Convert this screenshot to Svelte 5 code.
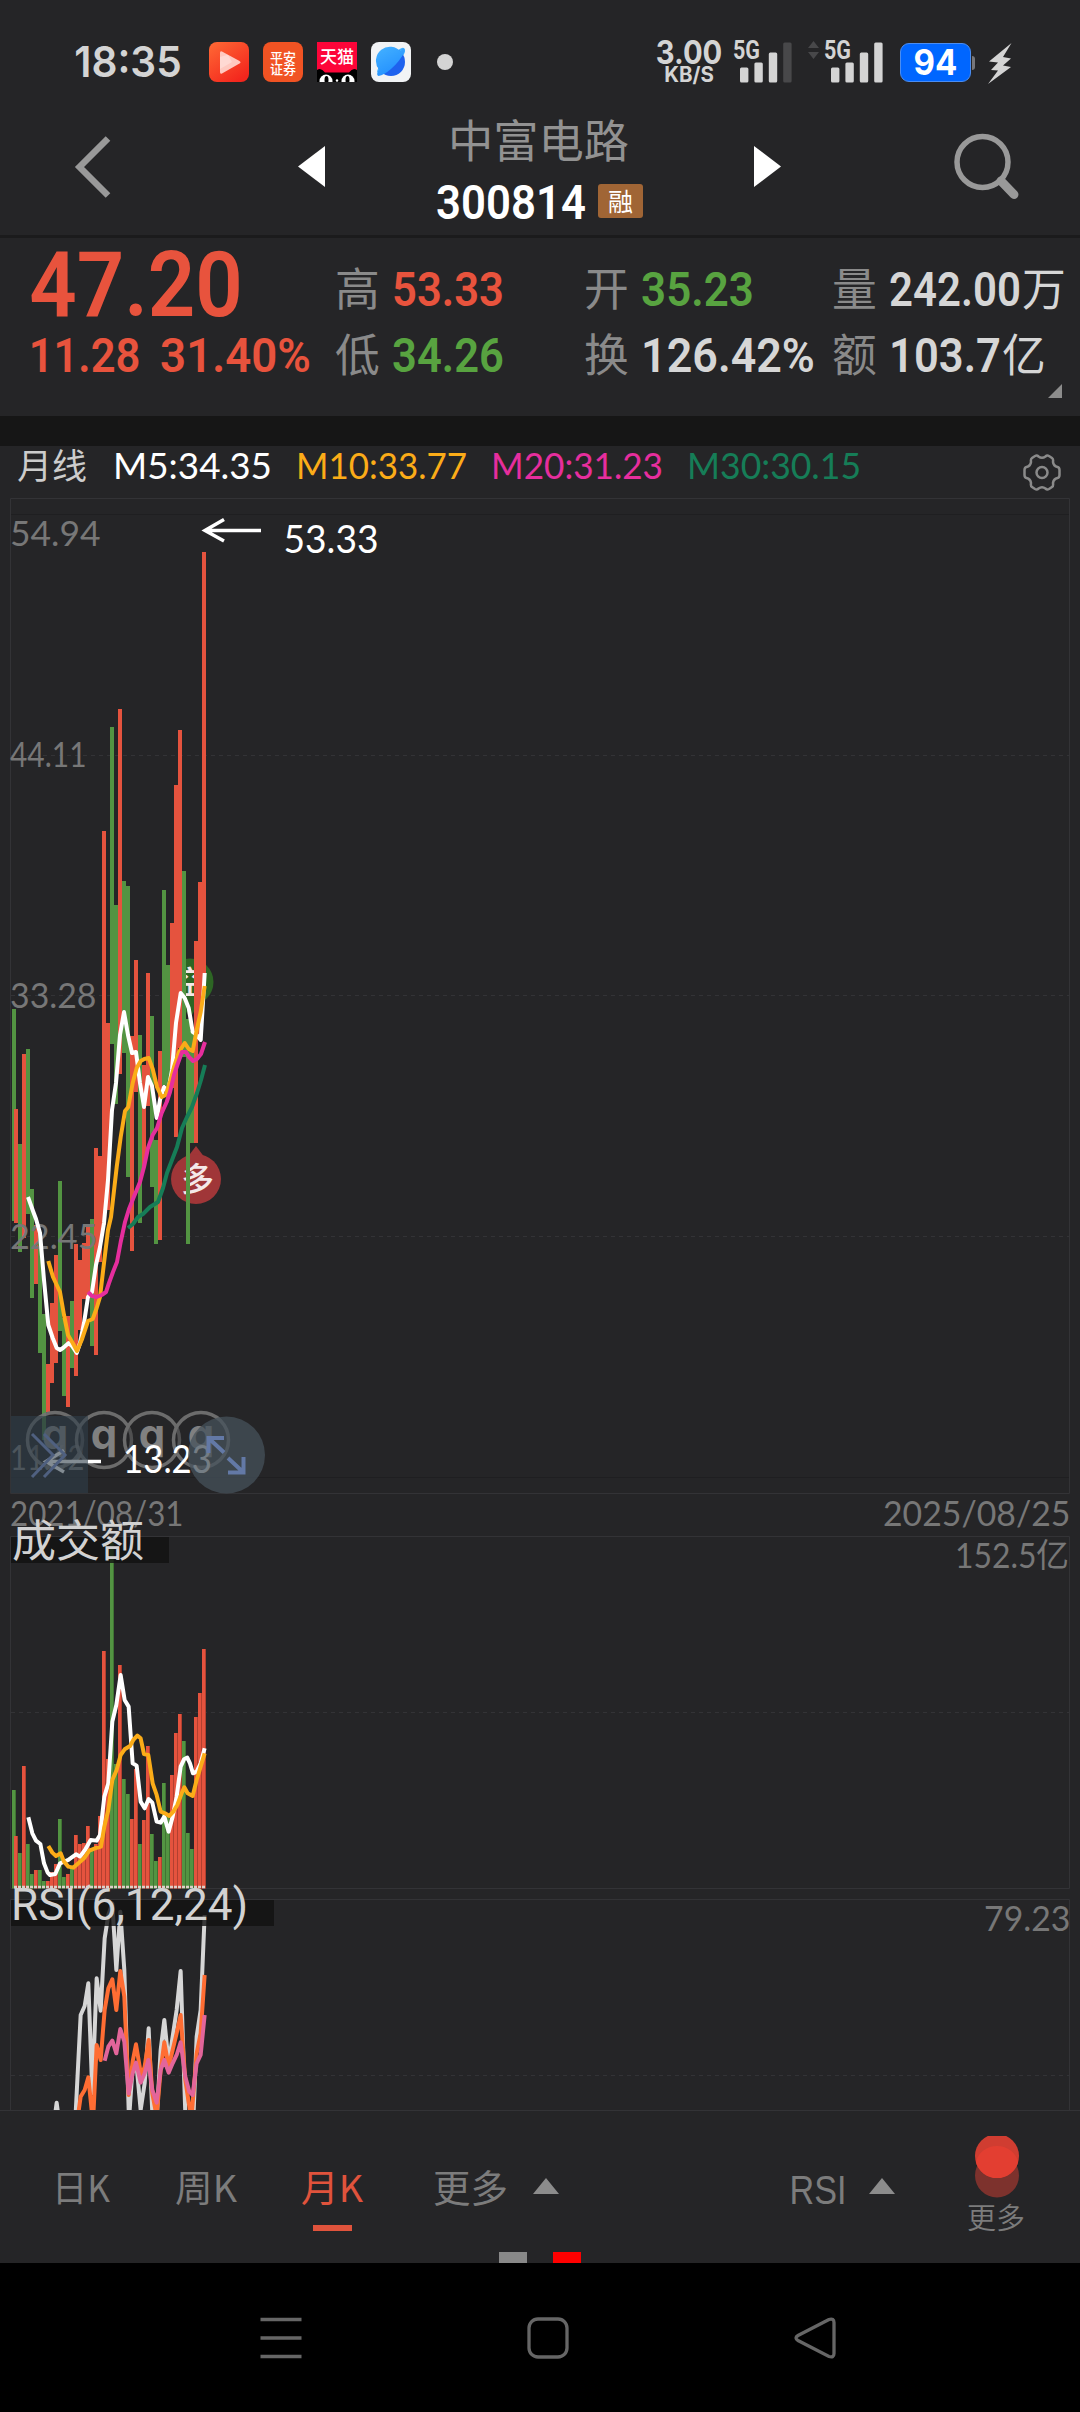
<script lang="ts">
	type Candle = [up: number, high: number, low: number, volume: number];

	// up flag, high, low, top of the volume bar
	const candles: Candle[] = [
		[0, 1009, 1221, 1790], [1, 1109, 1223, 1836], [0, 1144, 1252, 1853], [1, 1054, 1238, 1766],
		[0, 1049, 1214, 1844], [0, 1189, 1298, 1874], [1, 1225, 1284, 1870], [0, 1232, 1353, 1870],
		[0, 1314, 1440, 1881], [1, 1364, 1412, 1881], [1, 1303, 1383, 1872], [1, 1255, 1363, 1864],
		[0, 1181, 1331, 1819], [0, 1318, 1396, 1877], [1, 1316, 1407, 1874], [0, 1301, 1368, 1867],
		[1, 1244, 1376, 1835], [1, 1260, 1330, 1844], [1, 1243, 1299, 1843], [1, 1225, 1297, 1826],
		[0, 1219, 1346, 1848], [1, 1148, 1355, 1844], [1, 1156, 1262, 1816], [1, 831, 1225, 1651],
		[1, 1023, 1210, 1759], [0, 727, 1044, 1540], [0, 905, 1104, 1764], [1, 709, 1074, 1665],
		[0, 881, 1053, 1779], [0, 886, 1177, 1794], [1, 1036, 1251, 1819], [1, 960, 1092, 1769],
		[0, 1035, 1223, 1844], [1, 1065, 1167, 1820], [1, 973, 1106, 1746], [0, 1016, 1187, 1834],
		[0, 1140, 1244, 1861], [1, 1051, 1240, 1857], [0, 890, 1085, 1783], [0, 965, 1092, 1817],
		[1, 923, 1088, 1775], [1, 785, 1137, 1733], [1, 730, 1048, 1714], [0, 871, 1057, 1741],
		[0, 1019, 1244, 1833], [0, 1031, 1143, 1849], [1, 941, 1143, 1717], [1, 882, 1040, 1693],
		[1, 552, 985, 1649]
	];

	const barX = (i: number) => (i === 0 ? 12 : 10 + 4 * i);

	const priceLines = [
		{ color: '#ffffff', points: '28,1197 33,1211 36,1219 40,1233 44,1280 48.3,1325 52.7,1338 56.7,1348 60,1350 63,1348 68.7,1343 72,1346 76.7,1353 80,1343 84,1323 88,1297 92,1292 96,1265 100,1247 104,1223 108,1180 112,1110 116,1083 120,1035 124,1012 128,1035 132,1053 136,1052 140,1083 144,1107 148,1077 152,1086 156.7,1118 160,1100 164,1087 168,1092 172,1070 176,1023 180.7,993 184.7,998 188.7,1008 192.7,1032 196.7,1035 200.7,1040 204.7,973' },
		{ color: '#fbac18', points: '48.3,1261 53,1277 60,1292 64,1315 68,1335 72.7,1343 77,1351 81.7,1340 88,1321 92.7,1319 96.7,1308 100,1297 104,1263 108,1230 111,1217 116.7,1167 120.7,1137 125,1111 128.3,1107 132.7,1083 136.7,1068 140.7,1061 144.3,1059 148.7,1058 152.7,1069 157,1087 161.7,1097 165.7,1095 170,1082 174,1067 179,1052 184.7,1043 188.7,1049 192.7,1051 196.7,1030 200.7,1012 204.7,986' },
		{ color: '#e62e9d', points: '88,1292 92,1296 96.7,1297 101.7,1295 106,1292 109,1283 113,1272 117,1262 120.7,1242 125,1222 129,1209 133,1199 140,1182 144,1167 148,1148 152.7,1135 157,1128 161.7,1113 166.7,1102 170,1092 174,1075 178,1063 182,1052 186,1052 189,1057 193,1061 197,1059 201,1054 205,1042' },
		{ color: '#167d57', points: '128,1228 133,1224 138,1217 143,1214 150,1207 158,1202 163,1188 167,1173 172,1160 177,1147 182,1128 187,1117 192,1107 197,1093 201,1080 205,1065' }
	];

	// lower panels are kept on a grid of thirds, see the scaled groups below
	const volumeLines = [
		{ color: '#ffffff', points: '85,952 97,1000 108,1022 121,1032 132,1090 143,1118 150,1125 166,1122 180,1090 205,1080 228,1063 240,1070 255,1050 272,1020 290,1022 300,1005 313,890 325,850 337,665 349,615 362,525 374,600 386,620 398,790 410,797 422,905 434,925 446,897 457,908 470,965 482,968 493,950 506,995 518,950 530,890 542,800 552,778 562,773 570,790 579,820 590,815 602,790 614,745' },
		{ color: '#fbac18', points: '145,1038 157,1058 168,1068 182,1060 192,1085 205,1100 220,1103 235,1090 252,1075 268,1052 285,1045 303,1040 313,980 325,930 337,840 350,810 362,765 374,748 390,738 400,720 412,707 422,715 432,762 445,765 458,850 470,885 482,935 495,940 508,948 520,935 532,915 545,880 553,862 563,880 578,888 590,840 602,800 614,760' }
	];

	const rsiLines = [
		{ color: '#d6d6d6', points: '158,760 170,668 182,760 224,760 242,405 254,378 265,310 277,640 290,295 302,392 314,175 325,105 337,70 349,270 361,95 373,270 387,720 398,560 410,560 422,690 434,610 446,445 457,700 470,720 482,510 493,420 506,550 518,470 530,390 542,273 556,700 568,720 580,720 590,470 602,390 614,105' },
		{ color: '#ff6d33', points: '235,700 242,650 254,630 265,592 279,730 290,495 302,540 314,390 325,325 337,298 349,390 361,273 373,350 386,645 398,545 408,493 424,590 434,560 446,480 457,640 470,710 482,570 493,487 506,560 518,510 530,460 542,405 556,600 574,720 590,520 602,460 614,285' },
		{ color: '#e3659a', points: '314,542 325,500 337,482 349,520 361,447 373,485 386,640 398,580 408,548 422,608 434,580 445,540 457,630 470,668 482,570 493,540 506,578 518,550 530,525 542,487 556,590 568,635 578,645 590,550 602,525 614,405' }
	];

	const axis = [
		{ text: '54.94', x: 12, y: 545.5, w: 87 },
		{ text: '44.11', x: 12, y: 766.5, w: 73 },
		{ text: '33.28', x: 12, y: 1007.5, w: 83 },
		{ text: '22.45', x: 12, y: 1248.5, w: 84 },
		{ text: '11.62', x: 12, y: 1469.5, w: 71 },
		{ text: '2021/08/31', x: 12, y: 1525.5, w: 170 },
		{ text: '2025/08/25', x: 885, y: 1525.5, w: 184 },
		{ text: '152.5', x: 957, y: 1567.5, w: 78 },
		{ text: '79.23', x: 986, y: 1930.5, w: 83 }
	];

	const quotes = [
		[
			{ name: '高', value: '53.33', w: 108, tone: 'up' },
			{ name: '低', value: '34.26', w: 108, tone: 'down' }
		],
		[
			{ name: '开', value: '35.23', w: 109, tone: 'down' },
			{ name: '换', value: '126.42%', w: 170, tone: 'plain' }
		],
		[
			{ name: '量', value: '242.00', w: 128, unit: '万', tone: 'plain' },
			{ name: '额', value: '103.7', w: 108, unit: '亿', tone: 'plain' }
		]
	];

	const legend = [
		{ text: 'M5:34.35', w: 154, color: '#ffffff' },
		{ text: 'M10:33.77', w: 166, color: '#fbac18' },
		{ text: 'M20:31.23', w: 167, color: '#e62e9d' },
		{ text: 'M30:30.15', w: 169, color: '#167d57' }
	];

	const tabs = [
		{ name: '日K', w: 58 },
		{ name: '周K', w: 62 },
		{ name: '月K', w: 62 }
	];
	let active = $state('月K');
</script>

<!-- text squeezed to a given width, box height is the cap height -->
{#snippet fit(text: string, w: number, size: number, cls: string, pad = 0.05)}
	<svg class="fit {cls}" width={w} height={size * 0.715}>
		<text x={-pad * size} y={size * 0.715} font-size={size} textLength={w + 2 * pad * size} lengthAdjust="spacingAndGlyphs">{text}</text>
	</svg>
{/snippet}

{#snippet signal(bars: number[], weak: number)}
	<svg class="signal" width="57" height="42" viewBox="0 0 57 42">
		<text x="-1" y="18" font-size="25" textLength="27" lengthAdjust="spacingAndGlyphs">5G</text>
		{#each bars as h, i}
			<rect x={6 + i * 14.4} y={41.5 - h} width="8.4" height={h} rx="1.5" class:weak={i >= weak} />
		{/each}
	</svg>
{/snippet}

<div class="screen">
	<div class="status">
		<div class="status-left">
			{@render fit('18:35', 104, 43, 'clock', 0.04)}
			<div class="apps">
				<svg width="40" height="40" viewBox="0 0 40 40">
					<defs>
						<linearGradient id="video" x1="0" y1="0" x2="0.7" y2="1">
							<stop offset="0" stop-color="#ff6a35" />
							<stop offset="1" stop-color="#f3261d" />
						</linearGradient>
						<linearGradient id="planet" x1="0" y1="0" x2="0.5" y2="1">
							<stop offset="0" stop-color="#45b2ff" />
							<stop offset="1" stop-color="#2390ff" />
						</linearGradient>
					</defs>
					<rect width="40" height="40" rx="8" fill="url(#video)" />
					<path d="M13 9.500 30.500 19q2 1.300 0 2.600L13 31.500q-2 1-2-1.500V11q0-2.500 2-1.500z" fill="#ffc9c0" />
					<path d="M11 15 19 12.800 23 20 11 27z" fill="#fff" opacity=".3" />
				</svg>
				<svg width="40" height="40" viewBox="0 0 40 40">
					<rect width="40" height="40" rx="8" fill="#f15323" />
					<g class="app-text thin-app" font-size="13">
						<text x="7" y="19.500">平安</text>
						<text x="7" y="31.500">证券</text>
					</g>
				</svg>
				<svg width="40" height="40" viewBox="0 0 40 40">
					<clipPath id="app"><rect width="40" height="40" rx="8" /></clipPath>
					<g clip-path="url(#app)">
						<rect width="40" height="40" fill="#fd0539" />
						<path d="M0 40V28q4-3 8 2.500h24Q36 25 40 28v12z" fill="#000" />
						<circle cx="9" cy="39" r="6.500" fill="#fff" />
						<circle cx="31" cy="39" r="6.500" fill="#fff" />
						<ellipse cx="9.500" cy="38" rx="2" ry="4" fill="#000" />
						<ellipse cx="30.500" cy="38" rx="2" ry="4" fill="#000" />
						<circle cx="20" cy="38.500" r="1.200" fill="#fff" />
						<text class="app-text thin-app" x="3" y="21" font-size="17">天猫</text>
					</g>
				</svg>
				<svg width="40" height="40" viewBox="0 0 40 40">
					<rect width="40" height="40" rx="8" fill="#f1f3f5" />
					<path d="M28 7.500Q32 4.500 33.500 6.500 35 9 32 14 31 20 6 30.500 6 28 8 25z" fill="#45b2ff" />
					<circle cx="20" cy="20" r="14" fill="#1e62ee" />
					<path d="M30 10A14 14 0 0 0 8 27.500Q4.500 33 7.500 34 13 33 20 27 29 19 33.500 10q1-5-3-3z" fill="url(#planet)" />
				</svg>
			</div>
			<span class="dot"></span>
		</div>
		<div class="status-right">
			<div class="speed">
				{@render fit('3.00', 64, 32, 'bold', 0.04)}
				{@render fit('KB/S', 48, 21, 'bold', 0.04)}
			</div>
			{@render signal([15, 20, 30, 40], 3)}
			<svg class="traffic" width="11" height="18" viewBox="0 0 11 18">
				<path d="M0 7 5.500 0 11 7zM0 11h11l-5.500 7z" />
			</svg>
			{@render signal([15, 20, 30, 40], 4)}
			<div class="battery">
				{@render fit('94', 41, 35, 'bold', 0.04)}
			</div>
			<svg class="bolt" width="25" height="41" viewBox="0 0 25 41">
				<path d="M23.500 0 1 18.500l9 1L3 27l7 .5L0 41l23-17-8-1.500 8-7-8-1.500z" />
			</svg>
		</div>
	</div>

	<header>
		<button class="back" aria-label="back">
			<svg width="40" height="66" viewBox="0 0 40 66">
				<path d="M35 4.500 6.500 33 35 61.500" />
			</svg>
		</button>
		<button aria-label="previous">
			<svg width="27" height="41" viewBox="0 0 27 41"><path d="M27 0v41L0 20.500z" fill="#fff" /></svg>
		</button>
		<div class="stock">
			{@render fit('中富电路', 181, 45, 'cjk name', 0)}
			<div class="code">
				{@render fit('300814', 146, 47.500, 'din', 0.04)}
				<span class="badge">融</span>
			</div>
		</div>
		<button aria-label="next">
			<svg width="27" height="41" viewBox="0 0 27 41"><path d="M0 0v41l27-20.500z" fill="#fff" /></svg>
		</button>
		<button class="search" aria-label="search">
			<svg width="66" height="68" viewBox="0 0 66 68">
				<circle cx="28.500" cy="29" r="25.500" stroke-width="5.500" />
				<path d="M47 48 60 61.500" stroke-width="9" stroke-linecap="round" />
			</svg>
		</button>
	</header>

	<section class="quote">
		<div class="price">
			<div class="row big">{@render fit('47.20', 210, 91, 'din up', 0.02)}</div>
			<div class="row small">
				{@render fit('11.28', 107, 47.500, 'din up')}
				{@render fit('31.40%', 147, 47.500, 'din up', 0.04)}
			</div>
		</div>
		<div class="figures">
			{#each quotes as column}
				<div class="column">
					{#each column as q}
						<div class="row">
							{@render fit(q.name, 43, 45, 'cjk label', 0.02)}
							{@render fit(q.value, q.w, 47.500, 'din value ' + q.tone, 0.04)}
							{#if q.unit}
								{@render fit(q.unit, 42, 45, 'cjk unit', 0.02)}
							{/if}
						</div>
					{/each}
				</div>
			{/each}
			<span class="corner"></span>
		</div>
	</section>

	<div class="legend">
		{@render fit('月线', 70, 35, 'cjk', 0)}
		{#each legend as item}
			<svg class="fit lato" width={item.w} height="27">
				<text x="-3" y="27" font-size="37.500" fill={item.color} textLength={item.w + 5} lengthAdjust="spacingAndGlyphs">{item.text}</text>
			</svg>
		{/each}
		<svg class="gear" width="38" height="38" viewBox="0 0 38 38">
			<path d="M12 2q2-1 3.500.5 3.500 2.500 7 0Q24 1 26 2l3 2q1.500 1 1 4 .5 4 4.500 5 2 .5 2 3v5q0 2.500-2 3-4 1-4.500 5 .5 3-1 4l-3 2q-2 1-3.500-.5-3.500-2.500-7 0Q14 36 12 35l-3-2q-1.500-1-1-4-.5-4-4.500-5-2-.5-2-3v-5q0-2.500 2-3 4-1 4.500-5-.5-3 1-4z" />
			<circle cx="19" cy="18.500" r="5.500" />
		</svg>
	</div>

	<svg class="chart" width="1080" height="1613" viewBox="0 498 1080 1613">
		<g class="frame">
			<path d="M10.500 498.500H1069.500V1493.500H10.500z" />
			<path d="M10.500 1536.500H1069.500V1888.500H10.500z" />
			<path d="M10.500 2111V1899.500H1069.500V2111" />
			<path d="M0 2110.500H1080" />
			<path class="inner" d="M11 514.500H1069M11 1477.500H1069" />
			<path class="dash" d="M11 755.500H1069M11 995.500H1069M11 1236.500H1069M11 1712.500H1069M11 2075.500H1069" />
		</g>

		<g class="marker">
			<path d="M180 1002 190 1018 200 1002z" fill="#2d6624" />
			<circle cx="190" cy="982" r="23.500" fill="#2d6624" />
			<text x="174" y="994" font-size="32">空</text>
			<path d="M187 1158 196 1146 205 1158z" fill="#a03638" />
			<circle cx="196" cy="1179" r="25" fill="#a03638" />
			<text x="181" y="1191" font-size="33">多</text>
		</g>

		{#each candles as [up, high, low, volume], i}
			<rect class={up ? 'rise' : 'fall'} x={barX(i)} y={high} width="4" height={low - high} />
			<rect class={up ? 'rise' : 'fall'} x={barX(i)} y={volume} width="4" height={1888.5 - volume} />
			<rect class="shade" x={barX(i) + 3} y={volume} width="1" height={1888.5 - volume} />
		{/each}
		<path class="zero" d="M14 1887H205" />

		<g class="axis">
			{#each axis as a}
				<text x={a.x - 2} y={a.y} textLength={a.w + 3.5} lengthAdjust="spacingAndGlyphs">{a.text}</text>
			{/each}
			<text class="cjk-text" x="1036" y="1567" font-size="33">亿</text>
		</g>

		<g class="lines">
			{#each priceLines as line}
				<polyline points={line.points} stroke={line.color} stroke-width="4" />
			{/each}
		</g>
		<g class="lines" transform="translate(0 1500) scale(0.3333)">
			{#each volumeLines as line}
				<polyline points={line.points} stroke={line.color} stroke-width="12" />
			{/each}
		</g>
		<clipPath id="rsi"><rect x="11" y="1900" width="1058" height="210" /></clipPath>
		<g clip-path="url(#rsi)">
			<g class="lines" transform="translate(0 1880) scale(0.3333)">
				{#each rsiLines as line}
					<polyline points={line.points} stroke={line.color} stroke-width="12" />
				{/each}
			</g>
		</g>

		<g class="callout">
			<path d="M261 530.500H205M224 519.500 205 530.500 224 541" />
			<text x="283.500" y="552.500" font-size="38.500" textLength="95" lengthAdjust="spacingAndGlyphs">53.33</text>
		</g>

		<g class="events">
			{#each [55, 104, 152, 201] as cx}
				<circle {cx} cy="1440" r="27.500" />
				<text x={cx} y="1449" text-anchor="middle">q</text>
			{/each}
		</g>
		<g class="callout">
			<path d="M101 1461.500H46M64 1450.500 46 1461.500 64 1472" />
			<text x="123" y="1473" font-size="38" textLength="89" lengthAdjust="spacingAndGlyphs">13.23</text>
		</g>
		<rect class="handle" x="11" y="1416" width="77" height="77" />
		<circle class="expand" cx="226.500" cy="1455" r="38.500" />
		<g class="tool-icon">
			<path class="chevrons" d="M32 1434 53 1455 32 1477M44 1434 65 1455 44 1477" />
			<path d="M224 1438H208.500V1453M209 1438.500 224 1452.500M228 1472.500H243.500V1457M243 1472 228 1458" />
		</g>

		<g class="panel-title">
			<rect x="11" y="1537" width="158" height="26" />
			<text class="cjk-text" x="12" y="1557" font-size="44" textLength="132" lengthAdjust="spacingAndGlyphs">成交额</text>
			<rect x="11" y="1900" width="263" height="26" />
			<text x="11" y="1919.500" font-size="44" textLength="237" lengthAdjust="spacingAndGlyphs">RSI(6,12,24)</text>
		</g>
	</svg>

	<div class="toolbar">
		{#each tabs as tab}
			<button class="tab" class:active={active === tab.name} onclick={() => (active = tab.name)}>
				{@render fit(tab.name, tab.w, 37, 'cjk', 0)}
			</button>
		{/each}
		<button class="menu">
			{@render fit('更多', 75, 38, 'cjk', 0)}
			<span class="caret"></span>
		</button>
		<button class="menu indicator">
			{@render fit('RSI', 52, 41, 'thin', 0.06)}
			<span class="caret"></span>
		</button>
		<button class="more">
			<svg width="46" height="62" viewBox="0 0 46 62">
				<circle cx="23" cy="39.500" r="22" fill="#7d322d" />
				<circle cx="23" cy="20" r="22" fill="#d03d31" />
				<path d="M1.800 26A22 22 0 0 1 44.200 26 22 22 0 0 1 1.800 26z" fill="#e33e31" />
			</svg>
			{@render fit('更多', 58, 29, 'cjk light', 0)}
		</button>
		<div class="pager"><span></span><span class="on"></span></div>
	</div>

	<nav>
		<svg width="42" height="42" viewBox="0 0 42 42"><path d="M0.500 2.500h41M0.500 21h41M0.500 39.500h41" /></svg>
		<svg width="42" height="42" viewBox="0 0 42 42"><rect x="2" y="2" width="38" height="38" rx="9" /></svg>
		<svg width="42" height="42" viewBox="0 0 42 42"><path d="M35 2.500 4 18.500q-4 2.500 0 5L35 39.500q5 1.500 5-3v-31q0-4.500-5-3z" /></svg>
	</nav>
</div>

<style>
	:global(body) {
		margin: 0;
		background: #000;
	}

	.screen {
		width: 1080px;
		height: 2412px;
		overflow: hidden;
		display: flex;
		flex-direction: column;
		background: #252527;
		font-family: Roboto, 'Noto Sans CJK SC', sans-serif;
	}

	button {
		border: none;
		background: transparent;
		padding: 0;
		display: flex;
		cursor: pointer;
	}

	svg {
		display: block;
		flex: none;
	}

	.fit {
		overflow: visible;
	}

	.din {
		font-weight: 600;
		fill: #fff;
	}

	.cjk {
		font-family: 'Noto Sans CJK SC', sans-serif;
		font-weight: 400;
	}

	.cjk.light {
		font-weight: 350;
	}

	.thin {
		font-weight: 300;
	}

	.bold {
		font-family: Inter, sans-serif;
		font-weight: 700;
		fill: #d4d4d4;
	}

	.lato {
		font-family: Lato, sans-serif;
	}

	.clock {
		font-family: Inter, sans-serif;
		font-weight: 600;
		fill: #d4d4d4;
	}

	/* status bar */
	.status {
		height: 82px;
		padding: 41px 67px 0 76px;
		box-sizing: border-box;
		display: flex;
		justify-content: space-between;
	}

	.status-left {
		display: flex;
		align-items: center;
	}

	.apps {
		display: flex;
		gap: 14px;
		margin-left: 29px;
		padding-top: 1px;
	}

	.app-text {
		font-family: 'Noto Sans CJK SC', sans-serif;
		font-weight: 700;
		fill: #fff;
	}

	.thin-app {
		font-weight: 500;
	}

	.dot {
		width: 16px;
		height: 16px;
		margin-left: 26px;
		border-radius: 50%;
		background: #d4d4d4;
	}

	.status-right {
		display: flex;
		align-items: flex-start;
	}

	.speed {
		width: 64px;
		margin-right: 13px;
		display: flex;
		flex-direction: column;
		align-items: center;
		gap: 3px;
	}

	.signal {
		font-family: Roboto, sans-serif;
		font-weight: 700;
		fill: #d4d4d4;
		overflow: visible;
	}

	.weak {
		fill: #48484a;
	}

	.traffic {
		margin: 0 6px 0 17px;
		fill: #48484a;
	}

	.battery {
		position: relative;
		width: 71px;
		height: 39px;
		margin: 2px 0 0 18px;
		box-sizing: border-box;
		border: 1px solid #4b8df0;
		border-radius: 9px;
		background: #0066ff;
		display: flex;
		align-items: center;
		justify-content: center;
	}

	.battery .bold {
		fill: #fff;
	}

	.battery::after {
		content: '';
		position: absolute;
		left: 71px;
		top: 12px;
		width: 3px;
		height: 14px;
		border-radius: 0 3px 3px 0;
		background: #77777b;
	}

	.bolt {
		margin: 2px 0 0 17px;
		fill: #d4d4d4;
	}

	/* header */
	header {
		height: 153px;
		padding: 0 60px 0 73px;
		box-sizing: border-box;
		display: grid;
		grid-template-columns: 225px 27px 429px 27px 1fr;
	}

	header button {
		align-self: start;
		margin-top: 64px;
	}

	header .back {
		margin-top: 52px;
		fill: none;
		stroke: #999;
		stroke-width: 6.5px;
	}

	header .search {
		margin-top: 51px;
		justify-self: end;
		fill: none;
		stroke: #999;
	}

	.stock {
		padding: 44px 0 0 123px;
		display: flex;
		flex-direction: column;
	}

	.name {
		fill: #929292;
	}

	.code {
		display: flex;
		gap: 14px;
		margin: 27px 0 0 -10px;
	}

	.badge {
		width: 45px;
		height: 34px;
		margin-top: -1px;
		border-radius: 3px;
		background: #a06535;
		color: #fff;
		font: 25px/33px 'Noto Sans CJK SC', sans-serif;
		text-align: center;
	}

	/* quote block */
	.quote {
		height: 181px;
		border-top: 3px solid #1b1b1c;
		box-sizing: border-box;
		display: flex;
	}

	.price {
		width: 336px;
		padding-left: 31px;
		box-sizing: border-box;
	}

	.row {
		height: 68px;
		display: flex;
		align-items: flex-end;
	}

	.row + .row {
		height: 66px;
	}

	.row.big {
		height: 78px;
	}

	.row.small {
		height: 56px;
		gap: 24px;
	}

	.figures {
		position: relative;
		flex: 1;
		display: grid;
		grid-template-columns: 249px 248px 1fr;
	}

	.label {
		fill: #8a8a8a;
		margin-right: 15px;
	}

	.plain,
	.unit {
		fill: #d6d6d6;
	}

	.unit {
		margin-left: 4px;
	}

	.up {
		fill: #e8533d;
	}

	.down {
		fill: #58a340;
	}

	.corner {
		position: absolute;
		right: 18px;
		bottom: 18px;
		border: 7px solid transparent;
		border-right-color: #8c8c8c;
		border-bottom-color: #8c8c8c;
	}

	/* moving average legend */
	.legend {
		height: 82px;
		border-top: 30px solid #161616;
		padding: 6px 19px 0 17px;
		box-sizing: border-box;
		display: flex;
		align-items: flex-start;
		gap: 29px;
	}

	.legend .cjk {
		fill: #ccc;
		margin-top: 2px;
	}

	.gear {
		margin: 2px 0 0 auto;
		fill: none;
		stroke: #8a8a8a;
		stroke-width: 2.5px;
	}

	/* chart */
	.frame path {
		fill: none;
		stroke: #333336;
	}

	.frame .inner {
		stroke: #1f1f21;
	}

	.frame .dash {
		stroke-dasharray: 4 4;
	}

	.marker text {
		font-family: 'Noto Sans CJK SC', sans-serif;
		font-weight: 500;
		fill: #f4e8e8;
	}

	.rise {
		fill: #e5533e;
	}

	.fall {
		fill: #539442;
	}

	.shade {
		fill: rgba(0, 0, 0, 0.22);
	}

	.zero {
		stroke: #dccfc8;
		stroke-width: 2.5px;
		stroke-dasharray: 3 1;
	}

	.axis {
		font-family: Lato, sans-serif;
		font-size: 34.5px;
		fill: #777;
	}

	.cjk-text {
		font-family: 'Noto Sans CJK SC', sans-serif;
		font-weight: 400;
	}

	.lines {
		fill: none;
		stroke-linejoin: round;
	}

	.callout {
		font-family: Lato, sans-serif;
		fill: #fff;
	}

	.callout path {
		fill: none;
		stroke: #fff;
		stroke-width: 3.5px;
	}

	.events {
		font: 700 42px Inter, sans-serif;
		fill: #8a8a8a;
		opacity: 0.9;
	}

	.events circle {
		fill: rgba(37, 37, 39, 0.4);
		stroke: #747474;
		stroke-width: 3.5px;
	}

	.handle {
		fill: #30404b;
		opacity: 0.6;
	}

	.expand {
		fill: #45525b;
		opacity: 0.75;
	}

	.tool-icon path {
		fill: none;
		stroke: #6379a6;
		stroke-width: 4px;
	}

	.tool-icon .chevrons {
		stroke: #4f6080;
		stroke-width: 3px;
	}

	.panel-title rect {
		fill: rgba(18, 18, 18, 0.8);
	}

	.panel-title text {
		fill: #d2d2d2;
	}

	/* bottom bar */
	.toolbar {
		position: relative;
		height: 152px;
		display: grid;
		grid-template-columns: 123px 126px 132px 359px 176px 58px;
		padding-left: 52px;
		align-items: start;
		fill: #7c7c7c;
	}

	.tab,
	.menu {
		height: 119px;
		padding-top: 65px;
		box-sizing: border-box;
		position: relative;
		align-items: flex-start;
		justify-self: start;
	}

	.active {
		fill: #e0533c;
	}

	.active::after {
		content: '';
		position: absolute;
		left: 12px;
		bottom: -1px;
		width: 39px;
		height: 6px;
		background: #e0533c;
	}

	.menu {
		gap: 25px;
		padding-top: 64px;
	}

	.caret {
		margin-top: 3px;
		border: 13px solid transparent;
		border-top: 0;
		border-bottom: 16px solid #8c8c8c;
	}

	.more {
		padding-top: 25px;
		flex-direction: column;
		align-items: center;
		gap: 10px;
	}

	.more .cjk {
		margin-left: -2px;
	}

	.pager {
		position: absolute;
		left: 499px;
		bottom: 0;
		display: flex;
		gap: 26px;
	}

	.pager span {
		width: 28px;
		height: 11px;
		background: #888;
	}

	.pager .on {
		background: #f00;
	}

	/* system navigation */
	nav {
		flex: 1;
		background: #000;
		display: flex;
		gap: 225px;
		padding: 54px 0 0 260px;
		fill: none;
		stroke: #666;
		stroke-width: 3.3px;
	}
</style>
